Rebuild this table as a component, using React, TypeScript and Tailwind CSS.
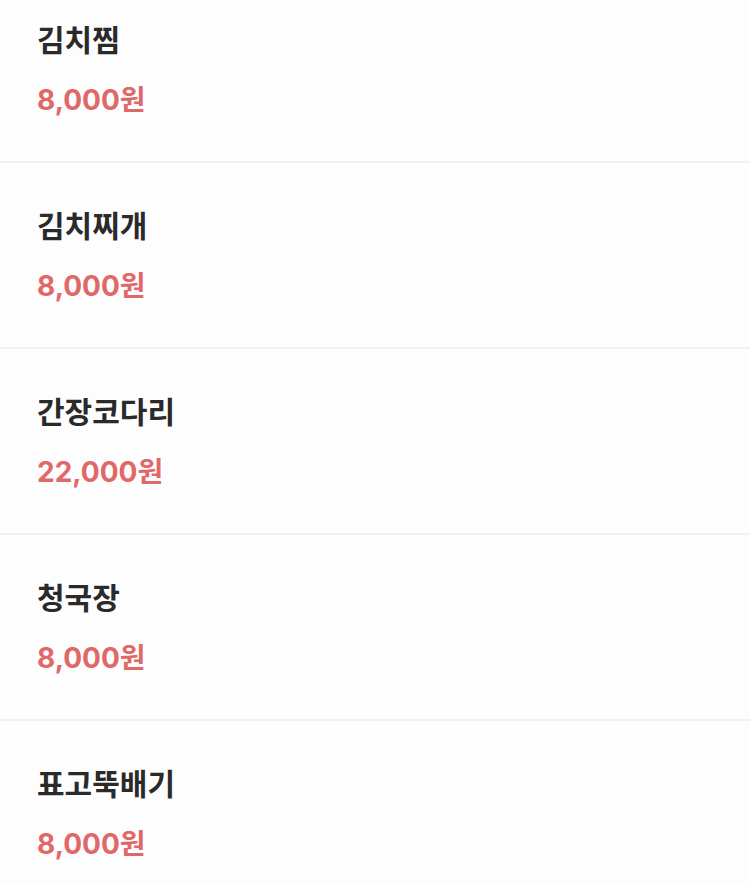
import React from "react";

type Menu = { name: string; price: string };

const menus: Menu[] = [
    { name: "김치찜", price: "8,000원" },
    { name: "김치찌개", price: "8,000원" },
    { name: "간장코다리", price: "22,000원" },
    { name: "청국장", price: "8,000원" },
    { name: "표고뚝배기", price: "8,000원" },
];

const MenuRow: React.FC<{ menu: Menu }> = ({ menu }) => {
    return (
        <div className="h-[186px] border-b-2 border-[#f0f1f3] px-[37px] pt-[43px]">
            {/* 메뉴 이름 */}
            <div className="text-[30px] leading-[40px] font-semibold text-[#2a2a2a]">{menu.name}</div>
            {/* 가격 */}
            <div className="mt-[20px] text-[28px] leading-[40px] font-bold text-[#e06868]">{menu.price}</div>
        </div>
    );
};

export default function App() {
    return (
        <div
            className="w-[750px] h-[883px] overflow-hidden bg-[#fefdfe]"
            style={{ fontFamily: "Inter, 'Noto Sans CJK KR', sans-serif" }}
        >
            <div className="-mt-[23px]">
                {menus.map((m) => (
                    <MenuRow key={m.name} menu={m} />
                ))}
            </div>
        </div>
    );
}
